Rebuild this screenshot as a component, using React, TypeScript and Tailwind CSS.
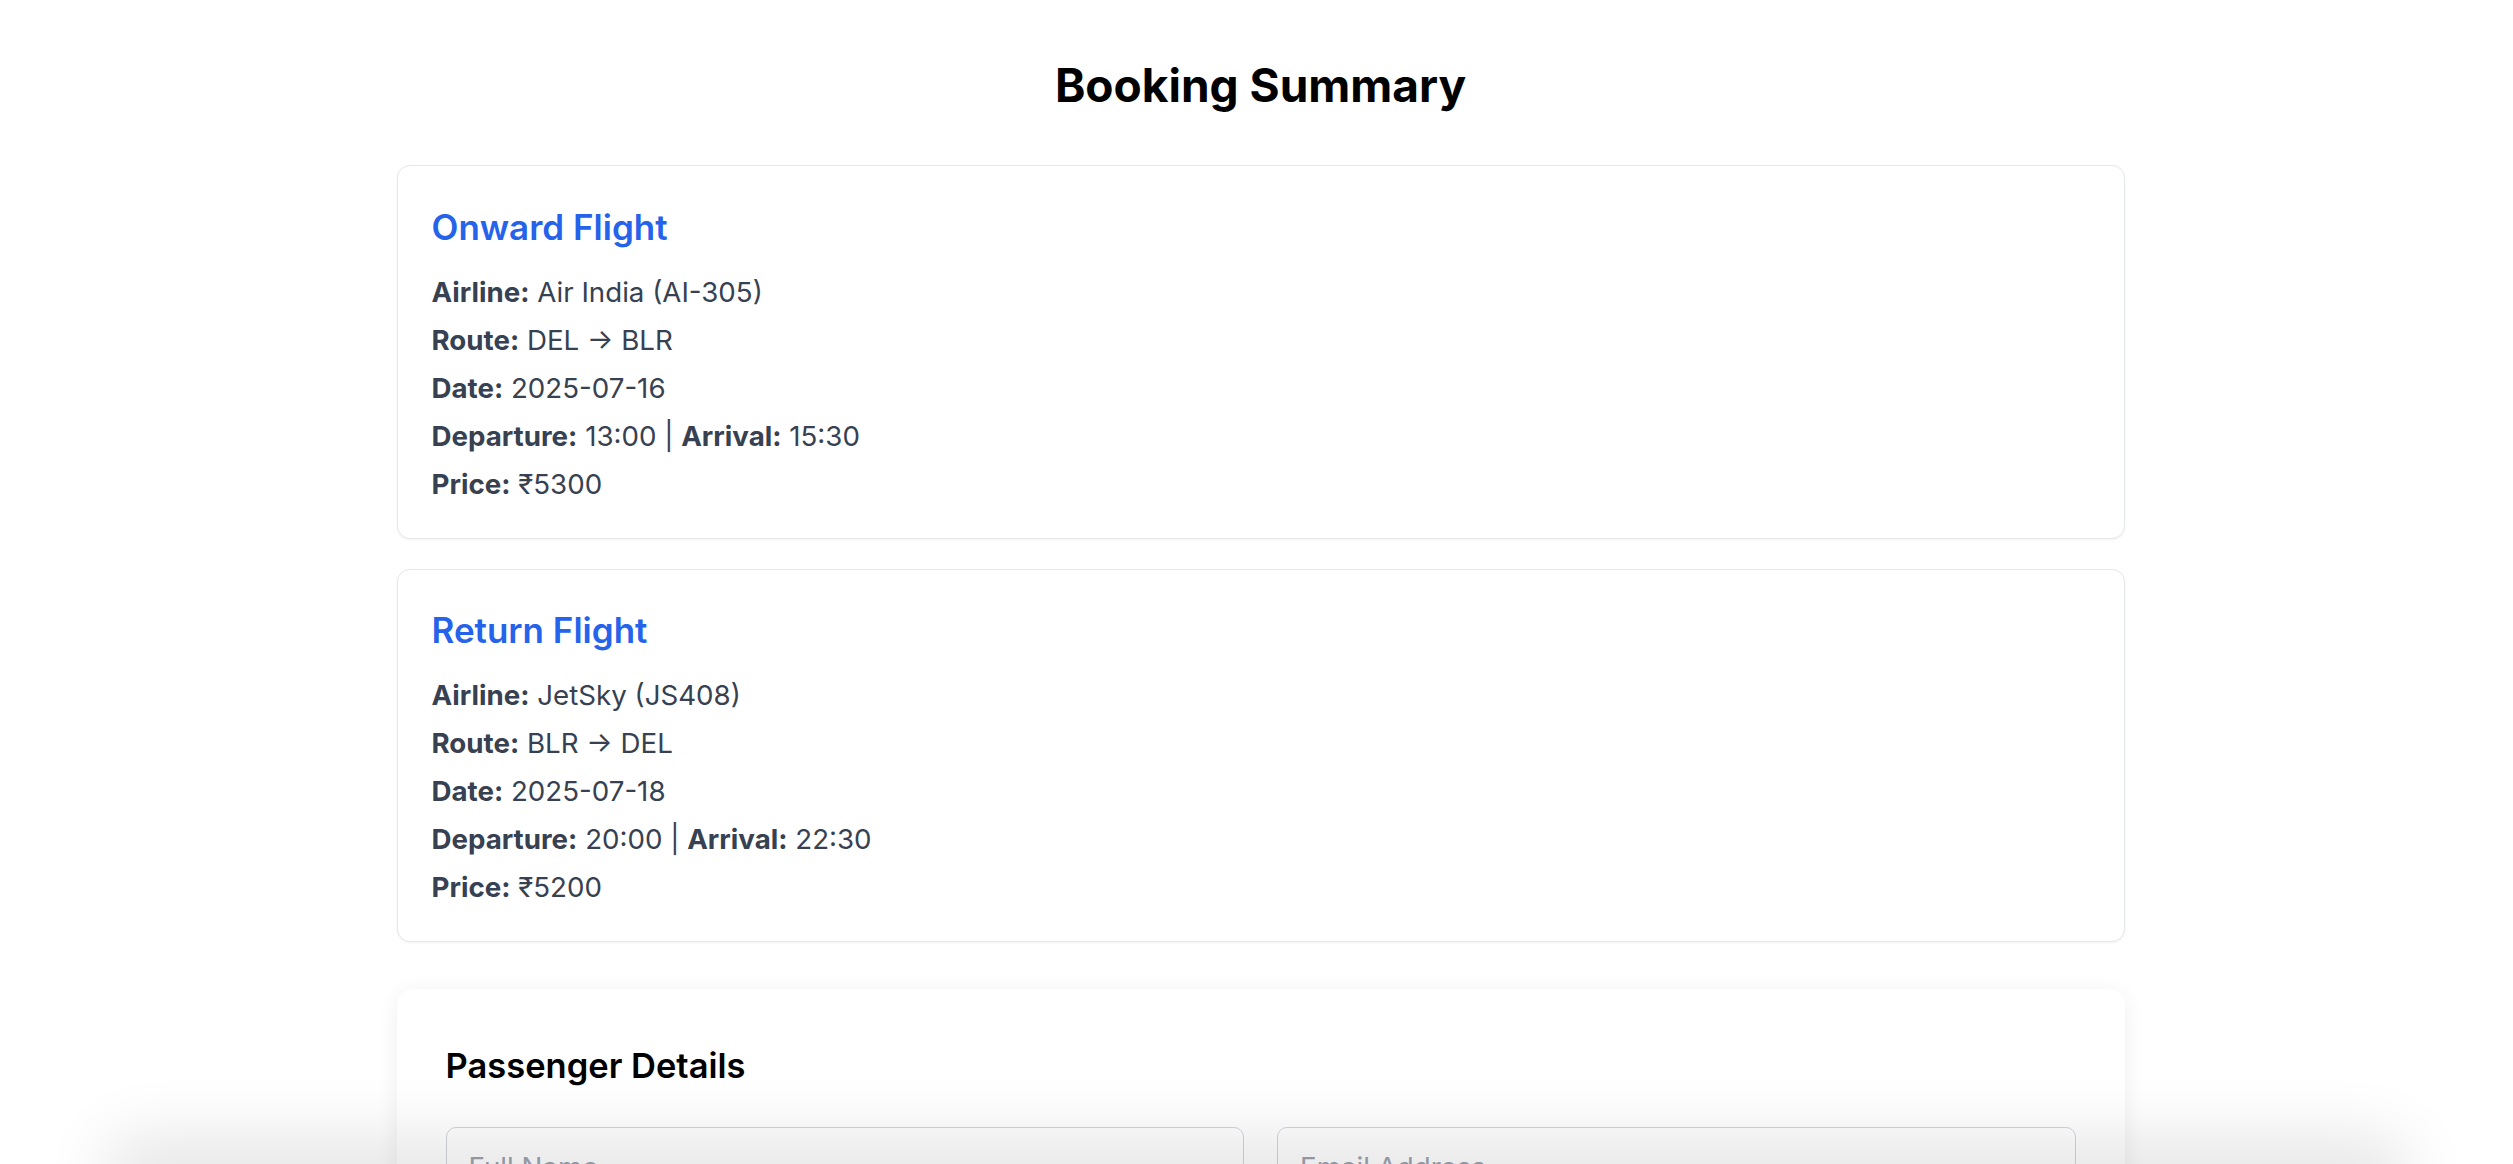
import React from 'react';

type Flight = {
  title: string;
  airline: string;
  route: string;
  date: string;
  departure: string;
  arrival: string;
  price: string;
};

const flights: Flight[] = [
  {
    title: 'Onward Flight',
    airline: 'Air India (AI-305)',
    route: 'DEL → BLR',
    date: '2025-07-16',
    departure: '13:00',
    arrival: '15:30',
    price: '₹5300',
  },
  {
    title: 'Return Flight',
    airline: 'JetSky (JS408)',
    route: 'BLR → DEL',
    date: '2025-07-18',
    departure: '20:00',
    arrival: '22:30',
    price: '₹5200',
  },
];

const FlightCard = ({ flight }: { flight: Flight }) => (
  <div className="bg-white rounded-[13px] border-[1.6px] border-[#e5e7eb] shadow-[0_1px_3px_rgba(0,0,0,0.05)] px-[34px] pt-[35.5px] pb-[34px]">
    <h3 className="text-[35px] leading-[51px] font-semibold text-[#2563eb] mb-[19px]">{flight.title}</h3>
    <div className="flex flex-col gap-[8px] text-[27.7px] leading-[40px] text-[#374151]">
      <p>
        <span className="font-bold">Airline:</span> {flight.airline}
      </p>
      <p>
        <span className="font-bold">Route:</span> {flight.route}
      </p>
      <p>
        <span className="font-bold">Date:</span> {flight.date}
      </p>
      <p>
        <span className="font-bold">Departure:</span> {flight.departure} | <span className="font-bold">Arrival:</span>{' '}
        {flight.arrival}
      </p>
      <p>
        <span className="font-bold">Price:</span> {flight.price}
      </p>
    </div>
  </div>
);

export default function App() {
  return (
    <div className="min-h-screen bg-white font-['Inter','Liberation_Sans',sans-serif] pl-[8px] pb-[80px]">
      <div className="w-[1728px] mx-auto pt-[57px]">
        <h1 className="text-center text-[46px] leading-[56px] font-bold text-black mb-[52px]">Booking Summary</h1>

        <div className="flex flex-col gap-[30px]">
          {flights.map((f) => (
            <FlightCard key={f.title} flight={f} />
          ))}
        </div>

        {/* Passenger form */}
        <div className="mt-[47px] bg-white rounded-[16px] shadow-[0_4px_22px_rgba(0,0,0,0.07)] px-[49px] pt-[53px] pb-[49px]">
          <h2 className="text-[34.5px] leading-[48px] font-semibold text-black mb-[37px]">Passenger Details</h2>
          <div className="grid grid-cols-2 gap-[33px]">
            <input
              placeholder="Full Name"
              className="h-[80px] rounded-[10px] border-[1.6px] border-[#d1d5db] px-[22px] text-[27.7px] text-[#111827] placeholder:text-[#9ca3af] outline-none"
            />
            <input
              placeholder="Email Address"
              className="h-[80px] rounded-[10px] border-[1.6px] border-[#d1d5db] px-[22px] text-[27.7px] text-[#111827] placeholder:text-[#9ca3af] outline-none"
            />
            <input
              placeholder="Phone Number"
              className="h-[80px] rounded-[10px] border-[1.6px] border-[#d1d5db] px-[22px] text-[27.7px] text-[#111827] placeholder:text-[#9ca3af] outline-none"
            />
            <input
              placeholder="Age"
              className="h-[80px] rounded-[10px] border-[1.6px] border-[#d1d5db] px-[22px] text-[27.7px] text-[#111827] placeholder:text-[#9ca3af] outline-none"
            />
          </div>
          <button className="mt-[38px] w-full h-[80px] rounded-[10px] bg-[#2563eb] text-white text-[28px] font-semibold">
            Confirm Booking
          </button>
        </div>
      </div>

      {/* soft shadow at the bottom of the viewport */}
      <div className="pointer-events-none fixed left-[120px] right-[120px] bottom-[-40px] h-[40px] rounded-full shadow-[0_-10px_64px_18px_rgba(0,0,0,0.1)]" />
    </div>
  );
}
